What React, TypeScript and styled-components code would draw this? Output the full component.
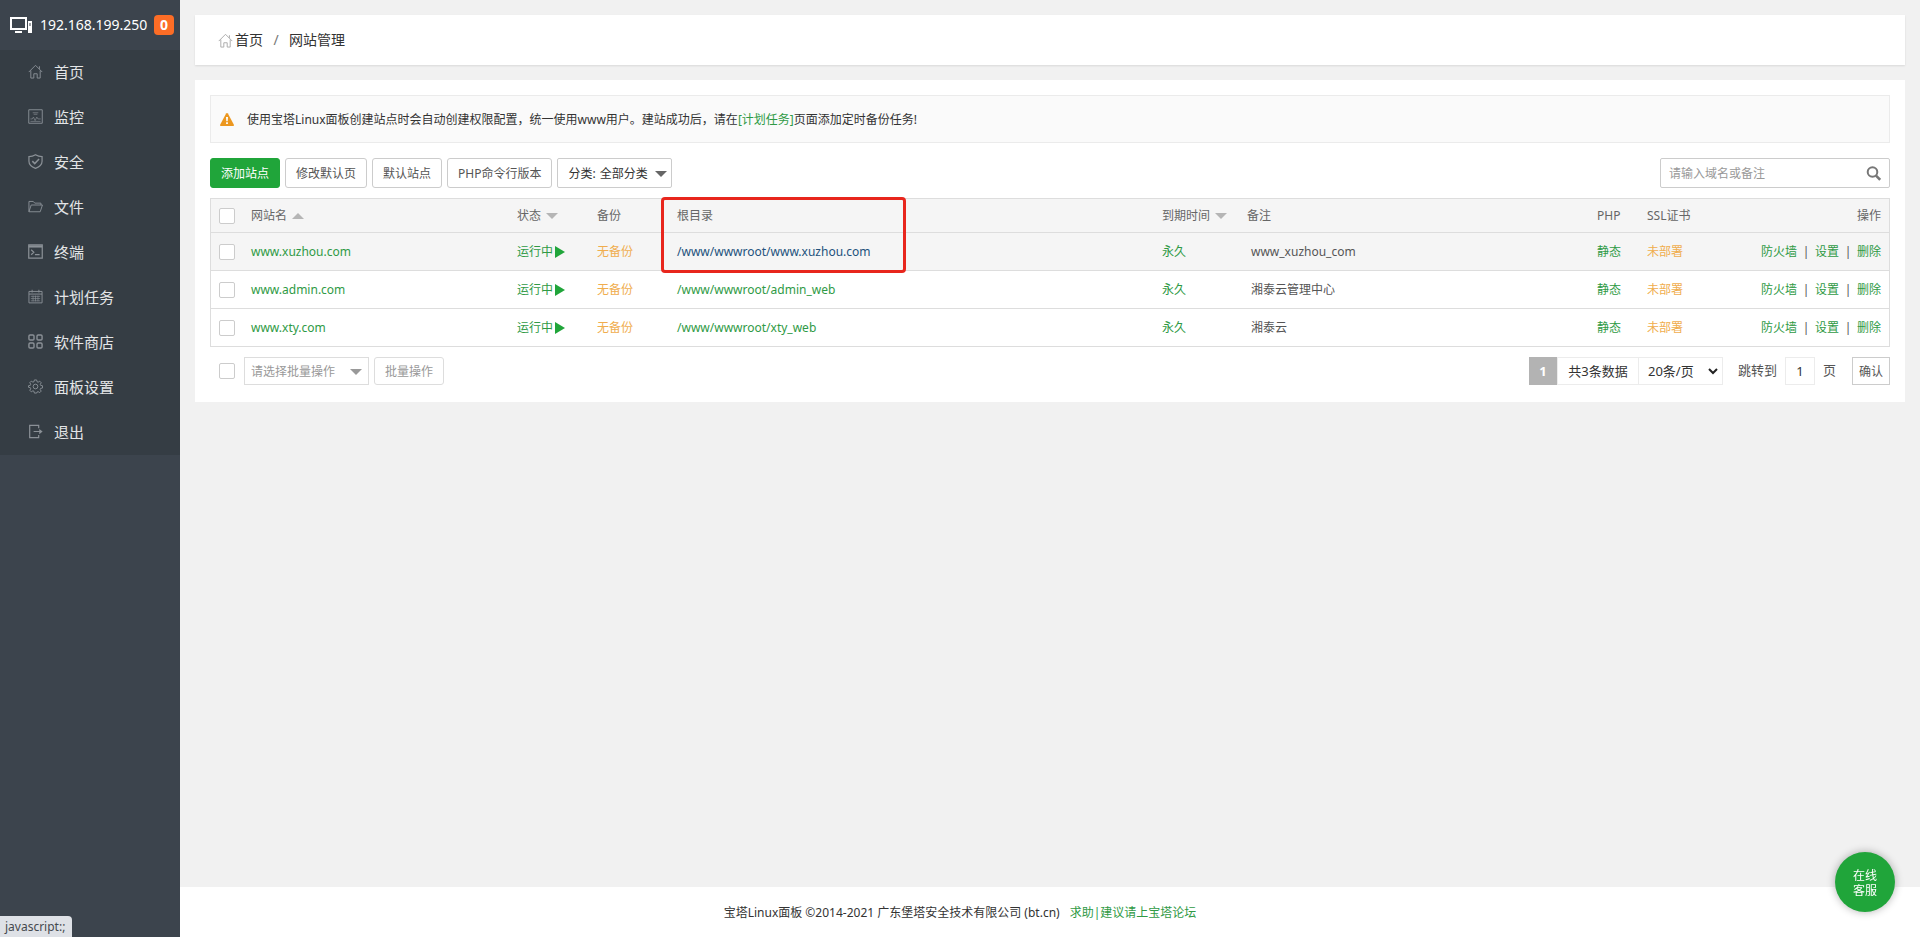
import React from "react";
import styled, { createGlobalStyle } from "styled-components";

const GREEN = "#20a53a";
const LINK = "#2f9a45";

const GlobalStyle = createGlobalStyle`
  *, *::before, *::after { box-sizing: border-box; }
  body {
    margin: 0;
    background: #f1f1f1;
    color: #333;
    font-family: "Noto Sans", "Noto Sans CJK SC", sans-serif;
    font-size: 12px;
    line-height: 20px;
  }
  button, input, select { font: inherit; color: inherit; margin: 0; }
  button { cursor: pointer; }
  svg { display: block; flex: none; }
`;

/* ---------- icons ---------- */

const Line = styled.svg.attrs({
  viewBox: "0 0 16 16",
  fill: "none",
  stroke: "currentColor",
  "aria-hidden": true,
})`
  width: 15px;
  height: 15px;
`;

const HomeIcon = () => (
  <Line>
    <path d="M.8 8.6 8 1.4l7.2 7.2M3 7v8h3.2v-4.6h3.6V15H13V7M12.2 5.2V2.4" />
  </Line>
);
const MonitorIcon = () => (
  <Line>
    <path d="M.8.8h14.4v14.4H.8z" />
    <path d="M5 4h6M6 5.6h4M2.6 10.6h2l1.2-2 1.8 3.8 1.8-3.8 1.2 2h3M2.6 13.2h10.800" strokeWidth=".7" />
  </Line>
);
const ShieldIcon = () => (
  <Line strokeWidth="1.3">
    <path d="M8 .8c2.2 1.4 4.4 2 7 2v5c0 3.6-2.8 6-7 7.6C3.8 13.8 1 11.4 1 7.8v-5c2.600 0 4.800-.6 7-2z" />
    <path d="m4.6 7.6 2.6 2.6 4.6-4.8" strokeWidth="1.6" />
  </Line>
);
const FolderIcon = () => (
  <Line>
    <path d="M1 13.6V2.600h4.600l1.600 1.800h6.600v2M1 13.600 3.400 6.400h12L13 13.600z" />
  </Line>
);
const TerminalIcon = () => (
  <Line strokeWidth="1.3">
    <path d="M.8 1h14.4v14H.8zM3.4 6.2l2.8 2.6-2.8 2.6M7.4 11.4h5" />
    <path d="M.8 2.6h14.4" strokeWidth="2.4" />
  </Line>
);
const CalendarIcon = () => (
  <Line>
    <path d="M1 2.6h14v12.2H1zM1 5.4h14M4.4.8v3M11.6.8v3" />
    <path d="M3 7.8h10M3 10.2h10M3 12.6h10M5.4 7v6.200M8 7v6.200M10.600 7v6.200" strokeWidth=".7" />
  </Line>
);
const GridIcon = () => (
  <Line strokeWidth="1.5">
    <rect x="1" y="1" width="5.4" height="5.4" rx="1.2" />
    <rect x="9.6" y="1" width="5.4" height="5.4" rx="1.2" />
    <rect x="1" y="9.6" width="5.4" height="5.4" rx="1.2" />
    <rect x="9.6" y="9.6" width="5.4" height="5.4" rx="1.2" />
  </Line>
);
const GearIcon = () => (
  <Line>
    <path d="M6.8 1h2.4l.4 1.9 1.2.5 1.7-1.1 1.6 1.7-1 1.7.4 1.1 2 .4v2.4l-2 .4-.5 1.2 1.1 1.7-1.6 1.600-1.700-1-1.200.4L9.200 15H6.800l-.4-1.900-1.200-.5-1.700 1.100-1.600-1.700 1-1.600-.5-1.200-1.900-.4V7.200l1.900-.4.5-1.200-1-1.700 1.600-1.600 1.700 1 1.200-.4z" />
    <circle cx="8" cy="8" r="2.5" />
  </Line>
);
const ExitIcon = () => (
  <Line strokeWidth="1.3">
    <path d="M11.4 4.4V1.4H1.8v13.2h9.6v-3M6 8h8" />
    <path d="M12 5.200 15.600 8 12 10.800z" fill="currentColor" stroke="none" />
  </Line>
);
const HostIcon = () => (
  <svg width="23" height="17" viewBox="0 0 23 17" aria-hidden="true">
    <path d="M1 1h15v11H1z" fill="none" stroke="#fff" strokeWidth="2" />
    <path d="M5 14h7v2H5z" fill="#fff" />
    <path d="M18 4h4v12h-4z" fill="#fff" />
    <path d="M19.5 6h1v3h-1z" fill="#3c444d" />
  </svg>
);
const WarningIcon = () => (
  <svg width="14" height="13" viewBox="0 0 14 13" aria-hidden="true">
    <path d="M7 0c.4 0 .7.2.9.5l6 11.2c.3.6 0 1.3-.8 1.3H.9c-.8 0-1.1-.7-.8-1.3L6.100.5C6.300.2 6.600 0 7 0z" fill="#ec971f" />
    <path d="M6 4h2l-.3 4.200H6.300zM6.100 9.200h1.800v1.700H6.100z" fill="#fff" />
  </svg>
);
const SearchIcon = () => (
  <svg width="15" height="15" viewBox="0 0 15 15" fill="none" stroke="#777" aria-hidden="true">
    <circle cx="6.500" cy="6" r="4.800" strokeWidth="2" />
    <path d="m10 9.600 4.200 4.200" strokeWidth="2.600" />
  </svg>
);
const PlayIcon = () => (
  <svg width="10" height="12" viewBox="0 0 10 12" aria-hidden="true">
    <path d="M0 0v12l10-6z" fill={GREEN} />
  </svg>
);
const Chevron = () => (
  <svg width="10" height="7" viewBox="0 0 10 7" fill="none" stroke="#222" strokeWidth="2" aria-hidden="true">
    <path d="m1 1 4 4 4-4" />
  </svg>
);

const Caret = styled.span<{ $color: string; $up?: boolean }>`
  width: 0;
  height: 0;
  border: 0 solid transparent;
  border-left-width: 6px;
  border-right-width: 6px;
  ${(p) => (p.$up ? `border-bottom: 6px solid ${p.$color};` : `border-top: 6px solid ${p.$color};`)}
`;

/* ---------- shell ---------- */

const Shell = styled.div`
  display: flex;
  min-height: 100vh;
`;

const Sidebar = styled.aside`
  flex: 0 0 180px;
  background: #3c444d;
`;

const Host = styled.div`
  display: flex;
  align-items: center;
  height: 50px;
  padding: 0 6px 0 10px;
  font-size: 14px;
  color: #fff;
`;

const HostAddress = styled.span`
  margin: 0 auto 0 7px;
`;

const Badge = styled.span`
  width: 20px;
  height: 20px;
  border-radius: 4px;
  background: #fc6d26;
  font-weight: 700;
  text-align: center;
`;

const Menu = styled.nav`
  background: #353d44;
`;

const MenuLink = styled.a`
  display: flex;
  align-items: center;
  gap: 11px;
  height: 45px;
  padding: 0 0 2px 28px;
  font-size: 15px;
  color: #e3e5e7;
  text-decoration: none;

  svg { color: #8a9096; }
`;

const Content = styled.main`
  flex: 1;
  min-width: 0;
  display: flex;
  flex-direction: column;
`;

const Breadcrumb = styled.nav`
  display: flex;
  align-items: center;
  height: 50px;
  margin: 15px 15px 0;
  padding-left: 23px;
  background: #fff;
  box-shadow: 0 1px 2px rgba(0, 0, 0, 0.1);
  font-size: 14px;

  svg { color: #aaa; margin-right: 2px; }
`;

const Crumb = styled.a`
  color: #333;
  text-decoration: none;
`;

const Slash = styled.span`
  width: 26px;
  text-align: center;
  color: #777;
`;

const Card = styled.section`
  margin: 15px;
  padding: 15px 15px 17px;
  background: #fff;
`;

const Notice = styled.div`
  display: flex;
  align-items: center;
  gap: 13px;
  height: 48px;
  padding: 1px 0 0 9px;
  border: 1px solid #ebebeb;
  background: #fafafa;
`;

const TextLink = styled.a<{ $tone?: string }>`
  color: ${(p) => p.$tone ?? LINK};
  text-decoration: none;
`;

/* ---------- toolbar ---------- */

const Bar = styled.div<{ $gapTop: number }>`
  display: flex;
  align-items: center;
  gap: 5px;
  margin-top: ${(p) => p.$gapTop}px;
`;

const Button = styled.button<{ $kind?: "primary" | "muted" }>`
  height: ${(p) => (p.$kind === "muted" ? 28 : 30)}px;
  padding: 1px 10px 0;
  border: 1px solid ${(p) => (p.$kind === "primary" ? GREEN : p.$kind === "muted" ? "#ddd" : "#ccc")};
  border-radius: 3px;
  background: ${(p) => (p.$kind === "primary" ? GREEN : "#fff")};
  color: ${(p) => (p.$kind === "primary" ? "#fff" : p.$kind === "muted" ? "#999" : "#555")};
  white-space: nowrap;
`;

const SelectBox = styled.label<{ $width: number; $muted?: boolean }>`
  display: flex;
  align-items: center;
  gap: 4px;
  width: ${(p) => p.$width}px;
  height: ${(p) => (p.$muted ? 28 : 30)}px;
  padding: ${(p) => (p.$muted ? "1px 6px 0" : "1px 4px 0 10px")};
  border: 1px solid ${(p) => (p.$muted ? "#ddd" : "#ccc")};
  border-radius: ${(p) => (p.$muted ? 0 : 2)}px;
  background: #fff;
  color: ${(p) => (p.$muted ? "#999" : "#333")};
  white-space: nowrap;
`;

const PlainSelect = styled.select`
  flex: 1;
  min-width: 0;
  padding: 0;
  border: 0;
  outline: 0;
  background: transparent;
  appearance: none;
`;

const SearchBox = styled.form`
  display: flex;
  align-items: center;
  width: 230px;
  height: 30px;
  margin-left: auto;
  padding: 0 8px;
  border: 1px solid #ccc;
  border-radius: 2px;
`;

const SearchInput = styled.input`
  flex: 1;
  min-width: 0;
  padding: 1px 0 0;
  border: 0;
  outline: 0;

  &::placeholder { color: #999; opacity: 1; }
`;

const IconButton = styled.button`
  padding: 0;
  border: 0;
  background: none;
`;

const Checkbox = styled.input.attrs({ type: "checkbox" })`
  display: block;
  width: 16px;
  height: 16px;
  border: 1px solid #ccc;
  border-radius: 2px;
  background: #fff;
  appearance: none;
`;

/* ---------- table ---------- */

const Table = styled.table`
  width: 100%;
  margin-top: 10px;
  border: 1px solid #ddd;
  border-collapse: separate;
  border-spacing: 0;
  table-layout: fixed;
`;

const Th = styled.th<{ $right?: boolean }>`
  position: relative;
  height: 34px;
  padding: 0 8px;
  border-bottom: 1px solid #ddd;
  background: #f5f5f5;
  color: #666;
  font-weight: 400;
  text-align: ${(p) => (p.$right ? "right" : "left")};
  white-space: nowrap;
`;

const Td = styled.td<{ $right?: boolean; $indent?: boolean }>`
  height: 38px;
  padding: 0 8px 0 ${(p) => (p.$indent ? 12 : 8)}px;
  border-bottom: 1px solid #ddd;
  color: #555;
  text-align: ${(p) => (p.$right ? "right" : "left")};
  white-space: nowrap;
`;

const Row = styled.tr<{ $active?: boolean }>`
  background: ${(p) => (p.$active ? "#f5f5f5" : "#fff")};

  &:last-child ${Td} {
    height: 37px;
    border-bottom: 0;
  }
`;

const Inline = styled.span<{ $gap: number }>`
  display: inline-flex;
  align-items: center;
  gap: ${(p) => p.$gap}px;
`;

const Divider = styled.span`
  display: inline-block;
  width: 18px;
  text-align: center;
`;

/* Marks the document root heading and the first row's path. */
const Highlight = styled.span`
  position: absolute;
  top: -2px;
  left: -8px;
  z-index: 1;
  width: 245px;
  height: 76px;
  border: 3px solid #e8261d;
  border-radius: 4px;
  pointer-events: none;
`;

/* ---------- pagination ---------- */

const BatchGroup = styled.div`
  display: flex;
  align-items: center;
  gap: 9px;
  padding-left: 9px;
`;

const Pager = styled.div`
  display: flex;
  align-items: center;
  margin-left: auto;
  font-size: 13px;
`;

const Current = styled.span`
  width: 28px;
  height: 28px;
  background: #b3b3b3;
  color: #fff;
  font-weight: 700;
  line-height: 28px;
  text-align: center;
`;

const Total = styled.span`
  width: 82px;
  height: 28px;
  border: 1px solid #ececec;
  line-height: 26px;
  text-align: center;
`;

const PageSize = styled.label`
  display: flex;
  align-items: center;
  width: 84px;
  height: 28px;
  margin-right: 15px;
  padding: 0 4px 0 9px;
  border: 1px solid #ececec;
  border-left: 0;
`;

const PageInput = styled.input`
  width: 30px;
  height: 28px;
  margin: 0 8px;
  padding: 0;
  border: 1px solid #ececec;
  outline: 0;
  text-align: center;
`;

const Confirm = styled.button`
  width: 38px;
  height: 28px;
  margin-left: 16px;
  padding: 2px 0 0;
  border: 1px solid #ccc;
  background: #fff;
  color: #555;
  font-size: 12px;
`;

const Muted = styled.label`
  padding-bottom: 2px;
  color: #555;
`;

/* ---------- footer and floating parts ---------- */

const Footer = styled.footer`
  display: flex;
  align-items: center;
  justify-content: center;
  gap: 10px;
  height: 50px;
  margin-top: auto;
  padding: 2px 180px 0 0;
  background: #fff;
`;

const Support = styled.button`
  position: fixed;
  right: 25px;
  bottom: 25px;
  width: 60px;
  height: 60px;
  padding: 2px 16px 0;
  border: 0;
  border-radius: 50%;
  background: ${GREEN};
  box-shadow: 0 0 8px rgba(0, 0, 0, 0.3);
  color: #fff;
  line-height: 15px;
`;

const StatusBubble = styled.div`
  position: fixed;
  left: 0;
  bottom: 0;
  width: 72px;
  height: 21px;
  padding-left: 5px;
  border-radius: 0 4px 0 0;
  background: #dee1e6;
  color: #45494e;
  line-height: 22px;
`;

/* ---------- data ---------- */

const menu = [
  { label: "首页", icon: <HomeIcon /> },
  { label: "监控", icon: <MonitorIcon /> },
  { label: "安全", icon: <ShieldIcon /> },
  { label: "文件", icon: <FolderIcon /> },
  { label: "终端", icon: <TerminalIcon /> },
  { label: "计划任务", icon: <CalendarIcon /> },
  { label: "软件商店", icon: <GridIcon /> },
  { label: "面板设置", icon: <GearIcon /> },
  { label: "退出", icon: <ExitIcon /> },
];

const sites = [
  { name: "www.xuzhou.com", path: "/www/wwwroot/www.xuzhou.com", note: "www_xuzhou_com", active: true },
  { name: "www.admin.com", path: "/www/wwwroot/admin_web", note: "湘泰云管理中心", active: false },
  { name: "www.xty.com", path: "/www/wwwroot/xty_web", note: "湘泰云", active: false },
];

const columns = [32, 266, 80, 80, undefined, 85, 350, 50, 90, 160];

export default function App() {
  return (
    <>
      <GlobalStyle />
      <Shell>
        <Sidebar>
          <Host>
            <HostIcon />
            <HostAddress>192.168.199.250</HostAddress>
            <Badge>0</Badge>
          </Host>
          <Menu>
            {menu.map((item) => (
              <MenuLink key={item.label} href="#">
                {item.icon}
                {item.label}
              </MenuLink>
            ))}
          </Menu>
        </Sidebar>

        <Content>
          <Breadcrumb>
            <HomeIcon />
            <Crumb href="#">首页</Crumb>
            <Slash>/</Slash>
            <Crumb href="#">网站管理</Crumb>
          </Breadcrumb>

          <Card>
            <Notice>
              <WarningIcon />
              <span>
                使用宝塔Linux面板创建站点时会自动创建权限配置，统一使用www用户。建站成功后，请在
                <TextLink href="#">[计划任务]</TextLink>
                页面添加定时备份任务!
              </span>
            </Notice>

            <Bar $gapTop={15}>
              <Button $kind="primary">添加站点</Button>
              <Button>修改默认页</Button>
              <Button>默认站点</Button>
              <Button>PHP命令行版本</Button>
              <SelectBox $width={115}>
                分类:
                <PlainSelect>
                  <option>全部分类</option>
                </PlainSelect>
                <Caret $color="#666" />
              </SelectBox>
              <SearchBox onSubmit={(e) => e.preventDefault()}>
                <SearchInput placeholder="请输入域名或备注" aria-label="请输入域名或备注" />
                <IconButton aria-label="搜索">
                  <SearchIcon />
                </IconButton>
              </SearchBox>
            </Bar>

            <Table>
              <colgroup>
                {columns.map((width, i) => (
                  <col key={i} width={width} />
                ))}
              </colgroup>
              <thead>
                <tr>
                  <Th><Checkbox aria-label="全选" /></Th>
                  <Th><Inline $gap={5}>网站名<Caret $up $color="#b5b5b5" /></Inline></Th>
                  <Th><Inline $gap={5}>状态<Caret $color="#b5b5b5" /></Inline></Th>
                  <Th>备份</Th>
                  <Th>根目录<Highlight /></Th>
                  <Th><Inline $gap={5}>到期时间<Caret $color="#b5b5b5" /></Inline></Th>
                  <Th>备注</Th>
                  <Th>PHP</Th>
                  <Th>SSL证书</Th>
                  <Th $right>操作</Th>
                </tr>
              </thead>
              <tbody>
                {sites.map((site) => (
                  <Row key={site.name} $active={site.active}>
                    <Td><Checkbox aria-label={site.name} /></Td>
                    <Td><TextLink href="#">{site.name}</TextLink></Td>
                    <Td>
                      <TextLink href="#"><Inline $gap={2}>运行中<PlayIcon /></Inline></TextLink>
                    </Td>
                    <Td><TextLink href="#" $tone="#f0ad4e">无备份</TextLink></Td>
                    <Td>
                      <TextLink href="#" $tone={site.active ? "#23527c" : undefined}>{site.path}</TextLink>
                    </Td>
                    <Td><TextLink href="#">永久</TextLink></Td>
                    <Td $indent>{site.note}</Td>
                    <Td><TextLink href="#">静态</TextLink></Td>
                    <Td><TextLink href="#" $tone="#f0ad4e">未部署</TextLink></Td>
                    <Td $right>
                      <TextLink href="#">防火墙</TextLink>
                      <Divider>|</Divider>
                      <TextLink href="#">设置</TextLink>
                      <Divider>|</Divider>
                      <TextLink href="#">删除</TextLink>
                    </Td>
                  </Row>
                ))}
              </tbody>
            </Table>

            <Bar $gapTop={10}>
              <BatchGroup>
                <Checkbox aria-label="全选" />
                <SelectBox $width={125} $muted>
                  <PlainSelect aria-label="批量操作">
                    <option>请选择批量操作</option>
                  </PlainSelect>
                  <Caret $color="#999" />
                </SelectBox>
              </BatchGroup>
              <Button $kind="muted">批量操作</Button>
              <Pager>
                <Current>1</Current>
                <Total>共3条数据</Total>
                <PageSize>
                  <PlainSelect aria-label="每页条数">
                    <option>20条/页</option>
                  </PlainSelect>
                  <Chevron />
                </PageSize>
                <Muted htmlFor="page">跳转到</Muted>
                <PageInput id="page" defaultValue="1" />
                <Muted htmlFor="page">页</Muted>
                <Confirm>确认</Confirm>
              </Pager>
            </Bar>
          </Card>

          <Footer>
            <span>宝塔Linux面板 ©2014-2021 广东堡塔安全技术有限公司 (bt.cn)</span>
            <TextLink href="#">求助|建议请上宝塔论坛</TextLink>
          </Footer>
        </Content>
      </Shell>
      <Support>在线客服</Support>
      <StatusBubble>javascript:;</StatusBubble>
    </>
  );
}
